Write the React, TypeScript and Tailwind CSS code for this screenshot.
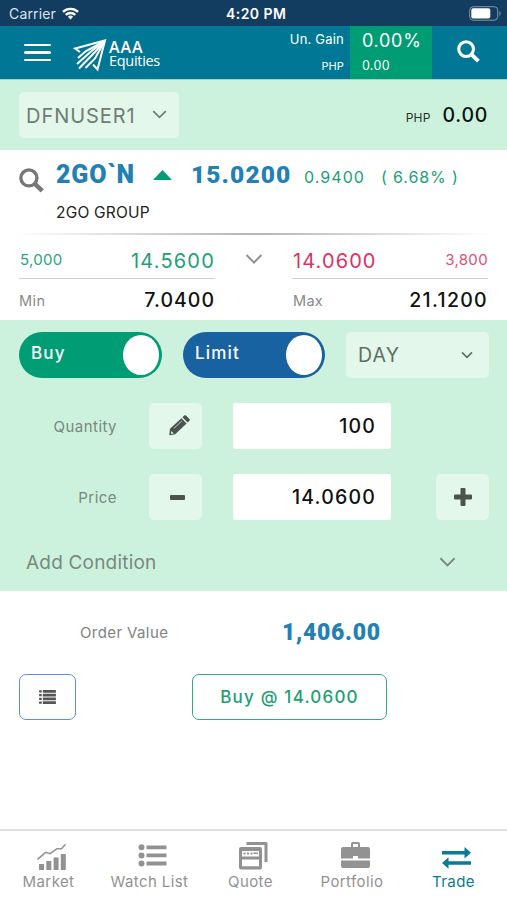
import { ReactNode } from "react";
import { clsx } from "clsx";

type ChevronProps = { className?: string; strokeWidth?: number };

function Chevron({ className, strokeWidth = 2 }: ChevronProps) {
  return (
    <svg viewBox="0 0 18 10" fill="none" stroke="currentColor" strokeWidth={strokeWidth} className={className}>
      <path d="M1.5 1l7.5 7.5L16.5 1" />
    </svg>
  );
}

function SearchIcon({ className }: { className?: string }) {
  return (
    <svg viewBox="0 0 24 24" fill="none" stroke="currentColor" className={className}>
      <circle cx="9.5" cy="9.5" r="7.7" strokeWidth="3.200" />
      <path d="M15.300 15.300l7 6.700" strokeWidth="4.200" />
    </svg>
  );
}

function PencilIcon() {
  return (
    <svg viewBox="0 0 22 22" className="mb-[2px] ml-[7px] h-[21px] w-[21px] text-[#4c534e]" fill="currentColor">
      <path d="M1 14.500L13 3.400l5.400 5.400L6.500 20.200l-5.200 1Q.4 21.300.4 20.300z" />
      <path d="M14 2.400l1.900-1.800c.6-.5 1.300-.5 1.900 0l3.600 3.500c.6.6.6 1.300 0 1.900l-1.900 1.900z" />
      <path d="M5.200 14l8.200-7.700" stroke="#cfe3d7" strokeWidth=".9" fill="none" />
      <path d="M2.300 16.800l2.700 2.600-2.900.6z" fill="#e3f7eb" />
    </svg>
  );
}

function MinusIcon() {
  return (
    <svg viewBox="0 0 15 5" className="ml-1 h-[5px] w-[15px]" fill="#4c534e">
      <rect width="15" height="5" rx="1" />
    </svg>
  );
}

function PlusIcon() {
  return (
    <svg viewBox="0 0 18 18" className="ml-px h-[18px] w-[18px]" fill="#4c534e">
      <rect x="6.500" width="5" height="18" rx="1" />
      <rect y="6.500" width="18" height="5" rx="1" />
    </svg>
  );
}

function Logo() {
  return (
    <svg viewBox="0 0 34 33" className="h-[33px] w-[34px]" fill="none" stroke="white" strokeWidth="2">
      <path d="M7 13l-5-3.500L32 1.500l-7.500 29-4.500-5" />
      <path d="M5 19l8-7L31 2.500" />
      <path d="M4 25l14-12.500L31 2.500" />
      <path d="M6 29.500l16.500-17 9-10" />
      <path d="M12.500 29l9.500-9.500 9.500-17" />
    </svg>
  );
}

function StatusBar() {
  return (
    <div className="flex h-[26px] items-center bg-[#133d60] pt-px text-white">
      <div className="flex w-[200px] items-center pl-[9px]">
        <span className="text-[14px] leading-none tracking-[0.150px] text-[#dbe3ea]">Carrier</span>
        <svg viewBox="0 0 18 13" className="ml-[6px] h-[13px] w-[17px]" fill="none" stroke="currentColor" strokeWidth="2.500">
          <path d="M1 4.800a11.500 11.500 0 0 1 16 0" />
          <path d="M4 8a7.200 7.200 0 0 1 10 0" />
          <path d="M9 12.800L6.200 10a4 4 0 0 1 5.600 0z" fill="currentColor" stroke="none" />
        </svg>
      </div>
      <div className="flex-1 pl-[26px] text-[14px] leading-none font-semibold tracking-[0.450px]">4:20 PM</div>
      <svg viewBox="0 0 33 15" className="mr-[4px] h-[15px] w-[35px]">
        <rect x=".7" y=".7" width="28" height="13.500" rx="3.500" fill="none" stroke="#8298aa" />
        <rect x="2.300" y="2.300" width="19" height="10.300" rx="1.800" fill="white" />
        <path d="M30.500 5c1.500.6 1.500 4.300 0 5z" fill="#8298aa" />
      </svg>
    </div>
  );
}

function Header() {
  return (
    <header className="flex h-[54px] items-stretch border-b border-[#9cd5d0] bg-[#007895] text-white">
      <button className="ml-6 flex w-[27px] flex-col justify-center gap-[5px]">
        <span className="h-[2.500px] rounded bg-white" />
        <span className="h-[2.500px] rounded bg-white" />
        <span className="h-[2.500px] rounded bg-white" />
      </button>
      <div className="ml-[22px] flex w-[160px] items-center pt-[5px]">
        <Logo />
        <div className="ml-[2px] pb-[2px] font-['Open_Sans',sans-serif] leading-[13px]">
          <div className="text-[16px] font-semibold tracking-[0.900px]">AAA</div>
          <div className="text-[14.500px] tracking-[-0.300px]">Equities</div>
        </div>
      </div>
      <div className="flex flex-1 flex-col items-end pt-[5px] pr-[6px]">
        <span className="text-[13px] leading-4 tracking-[0.200px]">Un. Gain</span>
        <span className="mt-[13px] text-[11px] leading-3 tracking-[0.100px]">PHP</span>
      </div>
      <div className="w-[82px] bg-[#009c74] pl-3">
        <div className="pt-[3px] text-[18px] leading-6 tracking-[0.700px]">0.00%</div>
        <div className="mt-[5px] text-[12.500px] leading-4 tracking-[0.300px]">0.00</div>
      </div>
      <div className="flex w-[75px] items-center pb-[2px] pl-[25px]">
        <SearchIcon className="h-[23px] w-[23px]" />
      </div>
    </header>
  );
}

function SoftBox({ className, children }: { className?: string; children: ReactNode }) {
  return <div className={clsx("flex items-center rounded-[5px] bg-[#e3f7eb]", className)}>{children}</div>;
}

function Toggle({ label, color }: { label: string; color: string }) {
  return (
    <div className={clsx("flex h-[46px] items-center justify-between rounded-full pr-[3px] pl-3", color)}>
      <span className="pb-[3px] text-[17px] leading-none font-medium tracking-[1.200px] text-white">{label}</span>
      <span className="h-10 w-9 rounded-[50%] bg-white" />
    </div>
  );
}

function Account() {
  return (
    <section className="flex h-[70px] items-center justify-between bg-[#ccf2dd] pr-[19px] pl-[19px]">
      <SoftBox className="h-[46px] w-[160px] justify-between pr-3 pl-[7px] text-[#6f7d74]">
        <span className="pt-px text-[20px] tracking-[0.950px]">DFNUSER1</span>
        <Chevron className="mb-[2px] h-[9px] w-[15px]" />
      </SoftBox>
      <div className="flex items-baseline pt-[2px]">
        <span className="mr-3 text-[12px] tracking-[0.200px] text-[#25302a]">PHP</span>
        <span className="text-[19.500px] font-medium tracking-[0.700px]">0.00</span>
      </div>
    </section>
  );
}

function QuoteSide({ children, bottom }: { children: ReactNode; bottom: ReactNode }) {
  return (
    <div className="w-[196px]">
      <div className="flex h-[44px] items-center justify-between border-b border-[#cfcfcf] pt-[7px]">{children}</div>
      <div className="flex h-[41px] items-center justify-between pt-[2px]">{bottom}</div>
    </div>
  );
}

function Quote() {
  return (
    <section className="h-[170px] bg-white">
      <div className="flex h-[83px] pl-[19px]">
        <SearchIcon className="mt-[18px] h-[25px] w-[25px] text-[#777]" />
        <div className="ml-3">
          <div className="flex h-[50px] items-center text-[#2280b3]">
            <span className="w-[97px] font-['Roboto',sans-serif] text-[25px] font-black tracking-[0.800px]">2GO`N</span>
            <svg viewBox="0 0 19 10" className="h-[10px] w-[19px]" fill="#009c74">
              <path d="M0 10L9.500 0 19 10z" />
            </svg>
            <span className="ml-[19px] w-[113px] font-['Roboto',sans-serif] text-[24.500px] font-black tracking-[1.100px]">
              15.0200
            </span>
            <span className="pt-[3px] text-[16px] tracking-[1.050px] text-[#209f75]">0.9400</span>
            <span className="ml-4 pt-[3px] text-[16px] tracking-[0.900px] text-[#209f75]">( 6.68% )</span>
          </div>
          <div className="pt-[3px] text-[15.500px] leading-5 tracking-[0.200px] text-[#222]">2GO GROUP</div>
        </div>
      </div>
      <div className="mx-4 h-[2px] bg-linear-to-r from-white via-[#b4b4b4] to-white" />
      <div className="flex px-[19px]">
        <QuoteSide
          bottom={
            <>
              <span className="text-[14.500px] tracking-[0.500px] text-[#8a8a8a]">Min</span>
              <span className="pt-px text-[19.500px] font-medium tracking-[1px]">7.0400</span>
            </>
          }
        >
          <span className="pl-px text-[15px] tracking-[0.300px] text-[#2aa57d]">5,000</span>
          <span className="pt-px text-[20px] tracking-[1.200px] text-[#209f75]">14.5600</span>
        </QuoteSide>
        <div className="flex h-[46px] flex-1 items-center justify-center pt-[2px]">
          <Chevron className="h-[10px] w-[18px] text-[#939393]" />
        </div>
        <QuoteSide
          bottom={
            <>
              <span className="pl-px text-[14.500px] tracking-[0.300px] text-[#8a8a8a]">Max</span>
              <span className="pt-px text-[19.500px] font-medium tracking-[1.300px]">21.1200</span>
            </>
          }
        >
          <span className="pt-px pl-px text-[20px] tracking-[1.100px] text-[#df315f]">14.0600</span>
          <span className="text-[15px] tracking-[0.350px] text-[#e44d75]">3,800</span>
        </QuoteSide>
      </div>
    </section>
  );
}

type FieldProps = { label: string; value: string; icon: ReactNode; action?: ReactNode };

function Field({ label, value, icon, action }: FieldProps) {
  return (
    <div className="flex h-[46px] items-center">
      <span className="w-[117px] pt-[2px] text-right text-[15px] tracking-[0.450px] text-[#7a887f]">{label}</span>
      <SoftBox className="ml-8 h-full w-[53px] justify-center">{icon}</SoftBox>
      <div className="ml-[31px] flex h-full w-[158px] items-center justify-end rounded-[3px] bg-white pt-[2px] pr-[15px] text-[19.500px] font-medium tracking-[1.200px]">
        {value}
      </div>
      {action}
    </div>
  );
}

function OrderForm() {
  return (
    <section className="h-[271px] bg-[#ccf2dd] pt-3">
      <div className="grid grid-cols-[143px_142px_143px] gap-[21px] pl-[19px]">
        <Toggle label="Buy" color="bg-[#009c74]" />
        <Toggle label="Limit" color="bg-[#1862a1]" />
        <SoftBox className="h-[46px] justify-between pr-4 pl-3 text-[#5f6e65]">
          <span className="pt-[2px] text-[19.500px] tracking-[1.200px]">DAY</span>
          <Chevron className="h-[8px] w-[12px]" strokeWidth={2.4} />
        </SoftBox>
      </div>
      <div className="mt-[25px] flex flex-col gap-[25px]">
        <Field label="Quantity" value="100" icon={<PencilIcon />} />
        <Field
          label="Price"
          value="14.0600"
          icon={<MinusIcon />}
          action={
            <SoftBox className="ml-[45px] h-full w-[53px] justify-center">
              <PlusIcon />
            </SoftBox>
          }
        />
      </div>
      <div className="mt-[28px] flex items-center justify-between pr-[51px] pl-[26px] text-[#7a887f]">
        <span className="pt-px text-[19px] leading-7 tracking-[0.200px]">Add Condition</span>
        <Chevron className="mb-px h-[10px] w-[17px]" />
      </div>
    </section>
  );
}

function OrderSummary() {
  return (
    <section className="flex-1 bg-white pt-[24px]">
      <div className="flex h-9 items-center">
        <span className="w-[282px] pt-px pl-20 text-[15px] tracking-[0.400px] text-[#828282]">Order Value</span>
        <span className="font-['Roboto',sans-serif] text-[23px] font-black tracking-[0.700px] text-[#2280b3]">1,406.00</span>
      </div>
      <div className="mt-[23px] flex h-[46px] pl-[19px]">
        <button className="flex w-[57px] items-center justify-center rounded-[7px] border-[1.500px] border-[#5d8df0]">
          <svg viewBox="0 0 18 15" className="mr-px mb-px h-[14px] w-[17px]" fill="#555">
            {[0, 4, 8, 12].map((y) => (
              <path key={y} d={`M0 ${y + 0.2}h2.800v2.600H0zM4 ${y}h14v2.900H4z`} />
            ))}
          </svg>
        </button>
        <button className="ml-[116px] w-[195px] rounded-[7px] border-[1.500px] border-[#35a781] pt-px text-[17px] font-medium tracking-[1.200px] text-[#209f75]">
          Buy @ 14.0600
        </button>
      </div>
    </section>
  );
}

const tabs = [
  {
    label: "Market",
    width: "w-[97px]",
    icon: (
      <>
        <path d="M2 22h5v6H2zM9.300 19h5v9h-5zM16.600 15.500h5V28h-5zM23.800 12h5v16h-5z" />
        <path d="M.5 17.500l8-7.200 4.500 1.400 7-5h4.500l4-4.500" fill="none" stroke="currentColor" strokeWidth="1.600" />
      </>
    )
  },
  {
    label: "Watch List",
    width: "w-[105px]",
    icon: (
      <>
        <circle cx="3.500" cy="5.300" r="3" />
        <circle cx="3.500" cy="13.400" r="3" />
        <circle cx="3.500" cy="21.500" r="3" />
        <path d="M8.500 3.400h20v3.800h-20zM8.500 11.500h20v3.800h-20zM8.500 19.600h20v3.800h-20z" />
      </>
    )
  },
  {
    label: "Quote",
    width: "w-[97px]",
    icon: (
      <>
        <path d="M7.500 0H27a1.500 1.500 0 0 1 1.500 1.500V20h-3V3h-18z" />
        <path
          fillRule="evenodd"
          d="M2 5h19a2 2 0 0 1 2 2v18.500a2 2 0 0 1-2 2H2a2 2 0 0 1-2-2V7a2 2 0 0 1 2-2zm1 4v5.500h17V9zM3 17.500v6.800h17v-6.800z"
        />
        <path d="M4.500 10.500h2v2h-2zM8 10.500h2v2H8zM11.500 10.500h2v2h-2zM14.500 10.500h4.500v1.500h-4.500z" />
      </>
    )
  },
  {
    label: "Portfolio",
    width: "w-[106px]",
    icon: (
      <path
        fillRule="evenodd"
        d="M10 5V2c0-1.200.8-2 2-2h5c1.200 0 2 .8 2 2v3h8a2 2 0 0 1 2 2v9.500H17V14h-5v2.500H0V7a2 2 0 0 1 2-2zm2 0h5V2h-5zM0 18.500h29V24a2 2 0 0 1-2 2H2a2 2 0 0 1-2-2z"
      />
    )
  },
  {
    label: "Trade",
    width: "w-[97px]",
    active: true,
    icon: <path d="M0 9h22.500V5l6.500 5.700-6.500 5.700v-4H0zM29 19.300H6.500v-4L0 21l6.500 5.700v-4H29z" />
  }
];

function TabBar() {
  return (
    <nav className="flex h-[71px] border-t-2 border-[#e0e0e0] bg-white">
      {tabs.map((tab) => (
        <div
          key={tab.label}
          className={clsx("flex flex-col items-center pt-[11px]", tab.width, tab.active ? "text-[#087c98]" : "text-[#929292]")}
        >
          <svg viewBox="0 0 29 28" className="ml-[6px] h-[28px] w-[29px]" fill="currentColor">
            {tab.icon}
          </svg>
          <span className="mt-[2px] text-[15px] leading-5 tracking-[0.400px] whitespace-nowrap">{tab.label}</span>
        </div>
      ))}
    </nav>
  );
}

export default function App() {
  return (
    <div className="flex h-[900px] w-[507px] flex-col overflow-hidden bg-white font-['Inter',sans-serif] text-[#111]">
      <StatusBar />
      <Header />
      <Account />
      <Quote />
      <OrderForm />
      <OrderSummary />
      <TabBar />
    </div>
  );
}
